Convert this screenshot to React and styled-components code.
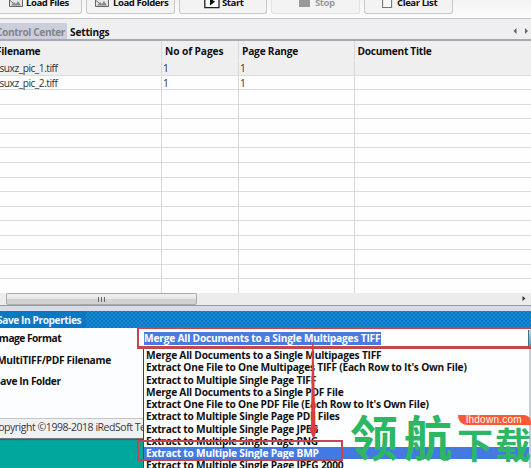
import React from 'react';
import styled, { createGlobalStyle, css } from 'styled-components';

const Global = createGlobalStyle`
  * { box-sizing: border-box; }
  html, body { margin: 0; padding: 0; overflow: hidden; }
  body { font-family: "Open Sans", "Noto Sans", sans-serif; font-size: 10.2px; color: #111; }
`;
const Window = styled.div`
  position: relative; width: 531px; height: 468px; overflow: hidden;
  display: flex; flex-direction: column; background: #00a79d;
`;
const Txt = styled.span`
  flex: none; white-space: pre; line-height: 14px;
  font-weight: ${p => (p.$regular ? 400 : 700)};
  font-size: ${p => p.$size || 10.2}px;
  letter-spacing: ${p => p.$ls ?? -0.22}px;
  margin-left: ${p => p.$ml || 0}px;
`;
const Toolbar = styled.div`
  flex: none; height: 19px; display: flex; gap: 4px; margin-left: -6px;
  border-bottom: 1px solid #c5c5c8; background: linear-gradient(#f4f4f5, #fcfcfc);
`;
const ToolButton = styled.div`
  flex: none; width: ${p => p.$w}px; height: 14px; display: flex; align-items: flex-start;
  padding-left: ${p => p.$pad}px; gap: ${p => p.$gap}px; overflow: hidden;
  border: 1px solid ${p => (p.$off ? '#e1e1e2' : '#c9c9ca')}; border-top: 0;
  border-radius: 0 0 3px 3px; background: #f3f3f3; color: ${p => (p.$off ? '#9b9b9b' : '#111')};
  svg { flex: none; display: block; }
  ${Txt} { margin-top: -4px; font-size: 9.6px; letter-spacing: -0.45px; }
`;
const Tabs = styled.div`
  flex: none; height: 22px; display: flex; align-items: flex-end; background: #efeff2;
  border-bottom: 2px solid #a9a9b3; position: relative;
`;
const Tab = styled.div`
  height: 16px; width: ${p => p.$w}px; padding-left: ${p => p.$pad || 0}px; display: flex;
  background: ${p => (p.$active ? '#cccddd' : 'transparent')};
  color: ${p => (p.$active ? '#85858c' : '#111')};
  ${Txt} { line-height: 19px; }
`;
const Arrows = styled.div`
  margin-left: auto; width: 22px; height: 16px; display: flex; svg { display: block; }
`;
const Grid = styled.div`
  flex: none; height: 252px; background: #fefefe; overflow: hidden;
`;
const GridRow = styled.div`
  display: grid; grid-template-columns: 162px 77px 115.5px 1fr; height: ${p => p.$h || 14.57}px;
  background: ${p => (p.$shade ? '#efeff0' : 'transparent')};
  border-bottom: 1px solid ${p => (p.$noline ? 'transparent' : '#dcdcdd')};
`;
const Cell = styled.div`
  border-right: 1px solid #dadadb; padding-left: ${p => p.$pad || 0}px; padding-top: ${p => p.$top || 0}px;
  display: flex; color: ${p => (p.$body ? '#333' : '#111')};
  &:last-child { border-right: 0; }
`;
const Scroll = styled.div`
  flex: none; height: 12px; display: flex; background: #ececed; align-items: center;
`;
const Thumb = styled.div`
  margin-left: 6px; width: 191px; height: 12px; border: 1px solid #aaaaab; border-radius: 2px;
  background: linear-gradient(#f1f1f1, #e6e6e7 48%, #d2d2d4 52%, #d3d3d5);
  display: flex; justify-content: center; align-items: center; gap: 1px;
`;
const Grip = styled.i` width: 1px; height: 5px; background: #666; margin-right: 1px; `;
const ScrollEnd = styled.div` margin-left: auto; width: 10px; height: 12px; svg { display: block; } `;
const Splitter = styled.div`
  flex: none; height: 6px; background: #d3dceb; border-top: 1px solid #909aa8;
`;
const Title = styled.div`
  flex: none; height: 17px; color: #eaf6ff; display: flex; background-color: #0878c4;
  padding-top: 2px;
`;
const Hatch = styled.div`
  flex: 1; margin: -2px 0 0 5px;
  background-image: radial-gradient(#1a8bd0 0.7px, transparent 1px), radial-gradient(#1a8bd0 0.7px, transparent 1px);
  background-size: 4px 4px; background-position: 0 0, 2px 2px;
`;
const Form = styled.div`
  flex: none; height: 90px; display: grid; grid-template-columns: 143px 1fr; background: #fbfdfe;
`;
const Labels = styled.div`
  display: flex; flex-direction: column; padding-top: 3px; gap: 7.5px;
`;
const Field = styled.div` height: 22px; padding: 4px 0 0 1px; display: flex; background: #fff; `;
const Selected = styled.div`
  height: 13px; width: 237px; background: #477be0; color: #fff; display: flex;
  ${Txt} { line-height: 13px; }
`;
const DropButton = styled.div`
  margin: -2px 0 0 auto; width: 3px; height: 18px; background: linear-gradient(#b9d9e8, #4a93b8); border-left: 1px solid #46707f;
`;
const Status = styled.div`
  flex: none; height: 21px; border-top: 1px solid #c5c5c6; background: #f1f0f2; display: flex; padding-top: 1px;
  color: #3a3a3a; border-bottom: 1px solid #777; box-shadow: 0 1px 1px #16766f;
`;
const Menu = styled.div`
  position: absolute; left: 143px; top: 348px; width: 388px; height: 125px; background: #fdfeff;
  border-left: 1px solid #444; border-top: 1px solid #555; border-right: 2px solid #c9ccd0;
`;
const Option = styled.div`
  height: 12.25px; padding-left: 2px; display: flex; align-items: center;
  ${p => p.$on && css`background: #4479e4; color: #fff;`}
  ${Txt} { line-height: 12px; }
`;
const Frame = styled.div`
  position: absolute; left: 137px; top: ${p => p.$top}px; width: ${p => p.$w}px; height: ${p => p.$h}px;
  border: 2px solid #c3484c; border-right-width: ${p => (p.$open ? 0 : 2)}px;
  border-bottom-width: ${p => (p.$open ? 3 : 2)}px;
`;
const Arrow = styled.svg` position: absolute; left: 306px; top: 343px; `;
const Mark = styled.div`
  position: absolute; left: ${p => p.$x}px; top: ${p => p.$y}px; white-space: nowrap;
  font: 700 ${p => p.$s}px/1 "Noto Sans CJK SC", sans-serif; color: #2db765;
`;
const Badge = styled.div`
  position: absolute; left: 458px; top: 415px; width: 73px; height: 10px; background: #fb5a36;
  border-radius: 0 7px 0 9px; color: #fff; padding-left: 8px;
  font: 10px/10px "Liberation Sans", sans-serif; letter-spacing: 0.25px;
`;

const PicIcon = () => (
  <svg width="16" height="8" viewBox="0 0 16 8">
    <path d="M1.5-2V6.5H14.5V-2" fill="#e6e6e6" stroke="#666" />
    <path d="M3 5.5L6 2L8 4L10 1L13 5.5Z" fill="#888" />
    <path d="M2 .5L5 3" stroke="#777" />
  </svg>
);
const PlayIcon = () => (
  <svg width="16" height="9" viewBox="0 0 16 9">
    <path d="M.8-2V7.6H15V-2" fill="#fafafa" stroke="#222" strokeWidth="1.3" />
    <path d="M6-2V5.5L11 1.8L6-2Z" fill="#111" />
  </svg>
);
const StopIcon = () => <svg width="11" height="8"><path d="M0 0H11V7H0Z" fill="#999" /></svg>;
const PageIcon = () => (
  <svg width="11" height="9"><path d="M.6-2V7.5H9.6V-2" fill="#fafafa" stroke="#777" strokeWidth="1.1" /></svg>
);

const options = [
  'Merge All Documents to a Single Multipages TIFF',
  "Extract One File to One Multipages TIFF (Each Row to It's Own File)",
  'Extract to Multiple Single Page TIFF',
  'Merge All Documents to a Single PDF File',
  "Extract One File to One PDF File (Each Row to It's Own File)",
  'Extract to Multiple Single Page PDF Files',
  'Extract to Multiple Single Page JPEG',
  'Extract to Multiple Single Page PNG',
  'Extract to Multiple Single Page BMP',
  'Extract to Multiple Single Page JPEG 2000',
];
const files = [['suxz_pic_1.tiff', '1', '1'], ['suxz_pic_2.tiff', '1', '1']];
const blanks = Array.from({ length: 14 }, (_, i) => i);

export default function App() {
  return (
    <>
      <Global />
      <Window>
        <Toolbar>
          <ToolButton $w={88} $pad={13} $gap={2}><PicIcon /><Txt>Load Files</Txt></ToolButton>
          <ToolButton $w={89} $pad={7} $gap={3}><PicIcon /><Txt>Load Folders</Txt></ToolButton>
          <ToolButton $w={88} $pad={24} $gap={2}><PlayIcon /><Txt>Start</Txt></ToolButton>
          <ToolButton $w={89} $pad={27} $gap={5} $off><StopIcon /><Txt>Stop</Txt></ToolButton>
          <ToolButton $w={89} $pad={17} $gap={4}><PageIcon /><Txt>Clear List</Txt></ToolButton>
        </Toolbar>
        <Tabs>
          <Tab $active $w={67}><Txt $ml={-4} $ls={-0.42}>Control Center</Txt></Tab>
          <Tab $w={60} $pad={3}><Txt>Settings</Txt></Tab>
          <Arrows>
            <svg width="22" height="16">
              <path d="M7.5 5V11L4.5 8Z" fill="#666" /><path d="M16 5V11L19 8Z" fill="#666" />
            </svg>
          </Arrows>
        </Tabs>
        <Grid>
          <GridRow $shade $noline $h={20}>
            <Cell $top={3}><Txt $ml={-4} $ls={-0.3}>Filename</Txt></Cell>
            <Cell $top={3} $pad={3}><Txt $ls={-0.1}>No of Pages</Txt></Cell>
            <Cell $top={3} $pad={3}><Txt>Page Range</Txt></Cell>
            <Cell $top={3} $pad={3}><Txt $ls={-0.3}>Document Title</Txt></Cell>
          </GridRow>
          {files.map((f, i) => (
            <GridRow key={f[0]} $shade={i === 0}>
              <Cell $body><Txt $regular $ml={-0.5} $ls={-0.5}>{f[0]}</Txt></Cell>
              <Cell $body $pad={1}><Txt $regular>{f[1]}</Txt></Cell>
              <Cell $body $pad={1}><Txt $regular>{f[2]}</Txt></Cell>
              <Cell />
            </GridRow>
          ))}
          {blanks.map(i => <GridRow key={i}><Cell /><Cell /><Cell /><Cell /></GridRow>)}
        </Grid>
        <Scroll>
          <Thumb><Grip /><Grip /><Grip /></Thumb>
          <ScrollEnd><svg width="10" height="12"><path d="M1.5 3V8L4.5 5.5Z" fill="#333" /></svg></ScrollEnd>
        </Scroll>
        <Splitter />
        <Title><Txt $ml={-3} $ls={-0.43}>Save In Properties</Txt><Hatch /></Title>
        <Form>
          <Labels>
            <Txt $ml={-4} $ls={-0.5}>Image Format</Txt>
            <Txt $ml={-3} $ls={-0.3}>MultiTIFF/PDF Filename</Txt>
            <Txt $ml={-5} $ls={-0.38}>Save In Folder</Txt>
          </Labels>
          <Field>
            <Selected><Txt $ls={-0.2}>{options[0]}</Txt></Selected>
            <DropButton />
          </Field>
        </Form>
        <Status><Txt $regular $size={10.5} $ml={-8} $ls={-0.46}>Copyright ©1998-2018 iRedSoft Te</Txt></Status>
        <Menu>
          {options.map((o, i) => <Option key={o} $on={i === 8}><Txt>{o}</Txt></Option>)}
        </Menu>
        <Frame $top={327} $w={394} $h={22} $open />
        <Frame $top={440} $w={206} $h={21} />
        <Arrow width="14" height="98"><path d="M6 0H7.5L9.5 84H12L7.5 96L2.5 84H5Z" fill="#d8403f" /></Arrow>
        <Mark $x={350} $y={411} $s={48}>领</Mark>
        <Mark $x={404} $y={411} $s={48}>航</Mark>
        <Mark $x={457} $y={425} $s={36}>下</Mark>
        <Mark $x={495} $y={425} $s={36}>载</Mark>
        <Badge>lhdown.com</Badge>
      </Window>
    </>
  );
}
